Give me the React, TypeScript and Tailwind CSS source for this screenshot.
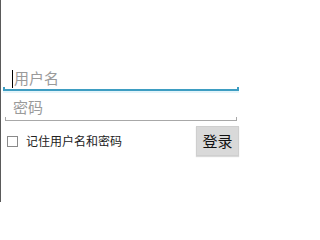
export default function App() {
  return (
    <div
      className="w-[241px] h-[202px] bg-white border-l border-[#5a5a5a] overflow-hidden"
      style={{ fontFamily: '"Noto Sans CJK SC", "Noto Sans", sans-serif' }}
    >
      <div className="pt-[63px] pl-[2px] pr-[2px]">
        {/* username */}
        <div className="relative h-[28px] flex items-end pl-[9px] pb-[3px]">
          <span className="w-px h-[18px] bg-black mr-px" />
          <span className="text-[15px] leading-[20px] text-[#9a9a9a]">用户名</span>
          <div className="absolute left-0 right-0 bottom-0 h-[2px] bg-[#3d9dc2]" />
          <div className="absolute left-0 bottom-0 w-[2px] h-[4px] bg-[#3d9dc2]" />
          <div className="absolute right-0 bottom-0 w-[2px] h-[4px] bg-[#3d9dc2]" />
          <div className="absolute left-0 right-0 -bottom-[2px] h-[2px] bg-[#e4f4fa]" />
        </div>
        {/* password */}
        <div className="relative h-[29px] flex items-end pl-[10px] pb-[4px] mt-[1px]">
          <span className="text-[15px] leading-[20px] text-[#9a9a9a]">密码</span>
          <div className="absolute left-[2px] right-[2px] bottom-0 h-px bg-[#a8a8a8]" />
          <div className="absolute left-[2px] bottom-0 w-px h-[4px] bg-[#a8a8a8]" />
          <div className="absolute right-[2px] bottom-0 w-px h-[4px] bg-[#a8a8a8]" />
        </div>
        {/* remember + login */}
        <div className="flex items-center justify-between mt-[5px] pl-[4px]">
          <div className="flex items-center">
            <span className="w-[11px] h-[11px] border border-[#8a8a8a] bg-white" />
            <span className="ml-[8px] text-[12px] leading-[16px] text-[#222]">记住用户名和密码</span>
          </div>
          <div className="w-[43px] h-[30px] bg-[#d9d9d9] border border-[#cfcfcf] shadow-[0_1px_1px_rgba(0,0,0,0.15)] flex items-center justify-center text-[15px] text-[#111]">
            登录
          </div>
        </div>
      </div>
    </div>
  );
}
